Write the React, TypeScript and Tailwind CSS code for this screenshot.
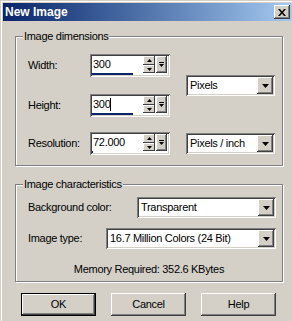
import React from "react";

const raised =
  "bg-[#d4d0c8] shadow-[inset_-1px_-1px_#404040,inset_1px_1px_#ffffff,inset_-2px_-2px_#808080,inset_2px_2px_#d4d0c8]";
const sunken =
  "bg-white shadow-[inset_1px_1px_#808080,inset_-1px_-1px_#ffffff,inset_2px_2px_#404040,inset_-2px_-2px_#d4d0c8]";
const etched = "border border-[#808080] shadow-[inset_1px_1px_#ffffff,1px_1px_#ffffff]";

function DownArrow() {
  return (
    <svg width="7" height="4" viewBox="0 0 7 4">
      <polygon points="0,0 7,0 3.5,4" fill="#000" />
    </svg>
  );
}

function SpinBox({ value, fill, caret }: { value: string; fill: number; caret?: boolean }) {
  return (
    <div className={`w-[80px] h-[23px] p-[2px] flex flex-col ${sunken}`}>
      <div className="flex h-[17px]">
        <div className="flex-1 flex items-center pl-px">
          {value}
          {caret && <span className="w-px h-[13px] bg-black" />}
        </div>
        <div className="flex flex-col w-[12px] mr-px">
          <div className="h-[9px] flex items-center justify-center bg-[#d4d0c8] shadow-[inset_-1px_-1px_#404040,inset_1px_1px_#ffffff]">
            <svg width="5" height="3" viewBox="0 0 5 3">
              <polygon points="2.5,0 5,3 0,3" fill="#000" />
            </svg>
          </div>
          <div className="h-[8px] flex items-center justify-center bg-[#d4d0c8] shadow-[inset_-1px_-1px_#404040,inset_1px_1px_#ffffff]">
            <svg width="5" height="3" viewBox="0 0 5 3">
              <polygon points="0,0 5,0 2.5,3" fill="#000" />
            </svg>
          </div>
        </div>
        <div className={`w-[11px] mr-px flex items-center justify-center ${raised}`}>
          <svg width="5" height="6" viewBox="0 0 5 6">
            <rect x="0" y="0" width="5" height="1" fill="#000" />
            <polygon points="0,2 5,2 2.5,5" fill="#000" />
          </svg>
        </div>
      </div>
      <div className="flex-1">
        <div className="h-[2px] bg-[#0a246a]" style={{ width: fill }} />
      </div>
    </div>
  );
}

function Select({ value, width }: { value: string; width: string }) {
  return (
    <div className={`${width} h-[21px] p-[2px] flex ${sunken}`}>
      <div className="flex-1 flex items-center pl-[2px]">{value}</div>
      <div className={`w-[16px] h-[17px] flex items-center justify-center ${raised}`}>
        <DownArrow />
      </div>
    </div>
  );
}

function Button({ label, isDefault }: { label: string; isDefault?: boolean }) {
  if (isDefault) {
    return (
      <div className="w-[75px] h-[23px] border border-black">
        <div className={`h-full flex items-center justify-center ${raised}`}>{label}</div>
      </div>
    );
  }
  return (
    <div className={`w-[75px] h-[23px] flex items-center justify-center ${raised}`}>{label}</div>
  );
}

export default function App() {
  return (
    <div className="w-[292px] h-[321px] pl-[3px] pt-[3px] bg-[#d4d0c8] shadow-[inset_1px_1px_#d4d0c8,inset_2px_2px_#ffffff] font-['Liberation_Sans',Arial,sans-serif] text-[11px] tracking-[-0.3px] text-black leading-[13px] overflow-hidden">
      {/* Title bar */}
      <div className="h-[18px] flex items-center justify-between pl-[2px] pr-[2px] bg-gradient-to-r from-[#0a246a] to-[#a6caf0]">
        <span className="text-white font-bold text-[12px] tracking-normal">New Image</span>
        <div className={`w-[16px] h-[14px] flex items-center justify-center ${raised}`}>
          <svg width="8" height="7" viewBox="0 0 8 7">
            <path d="M0 0h2l2 2.5L6 0h2L5 3.5 8 7H6L4 4.5 2 7H0l3-3.5z" fill="#000" />
          </svg>
        </div>
      </div>

      {/* Image dimensions */}
      <div className={`ml-[12px] mt-[15px] w-[268px] h-[130px] ${etched}`}>
        <span className="block w-fit -mt-[7px] ml-[7px] px-px bg-[#d4d0c8]">Image dimensions</span>
        <div className="flex items-center mt-[11px] pl-[12px]">
          <div className="flex flex-col gap-[17px]">
            <div className="flex items-center">
              <span className="w-[62px]">Width:</span>
              <SpinBox value="300" fill={41} />
            </div>
            <div className="flex items-center">
              <span className="w-[62px]">Height:</span>
              <SpinBox value="300" fill={41} caret />
            </div>
          </div>
          <div className="ml-[16px]">
            <Select value="Pixels" width="w-[89px]" />
          </div>
        </div>
        <div className="flex items-center mt-[15px] pl-[12px]">
          <span className="w-[62px]">Resolution:</span>
          <SpinBox value="72.000" fill={1} />
          <div className="ml-[16px]">
            <Select value="Pixels / inch" width="w-[89px]" />
          </div>
        </div>
      </div>

      {/* Image characteristics */}
      <div className={`ml-[12px] mt-[18px] w-[268px] h-[98px] ${etched}`}>
        <span className="block w-fit -mt-[7px] ml-[7px] px-px bg-[#d4d0c8]">Image characteristics</span>
        <div className="flex items-center mt-[6px] pl-[12px]">
          <span className="w-[109px]">Background color:</span>
          <Select value="Transparent" width="w-[139px]" />
        </div>
        <div className="flex items-center mt-[10px] pl-[12px]">
          <span className="w-[78px]">Image type:</span>
          <Select value="16.7 Million Colors (24 Bit)" width="w-[170px]" />
        </div>
        <div className="text-center mt-[14px]">Memory Required: 352.6 KBytes</div>
      </div>

      {/* Buttons */}
      <div className="flex gap-[15px] ml-[18px] mt-[11px]">
        <Button label="OK" isDefault />
        <Button label="Cancel" />
        <Button label="Help" />
      </div>
    </div>
  );
}
